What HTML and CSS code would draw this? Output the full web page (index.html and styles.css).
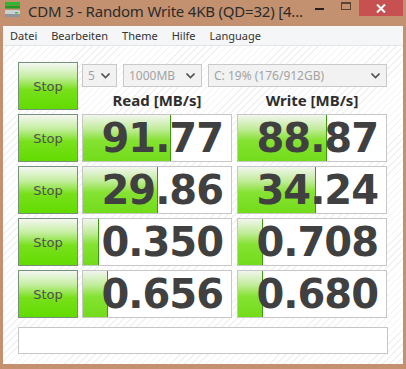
FILE: index.html
```html
<!DOCTYPE html>
<html>

<head>
  <meta charset="utf-8">
  <title>CDM 3 - Random Write 4KB (QD=32)</title>
  <link rel="stylesheet" href="styles.css">
</head>

<body>
  <div class="window">
    <div class="titlebar">
      <svg class="appicon" width="16" height="16" viewBox="0 0 16 16">
        <rect x="0" y="0" width="15" height="3" fill="#2fb82f"/>
        <rect x="0" y="3.5" width="15" height="3" fill="#1f9a1f"/>
        <rect x="0" y="8" width="15" height="7" rx="1" fill="#c9cfd3"/>
        <rect x="0" y="12" width="15" height="3" fill="#8e969b"/>
        <rect x="10" y="10" width="3" height="1.5" fill="#2fd02f"/>
      </svg>
      <span class="title">CDM 3 - Random Write 4KB (QD=32) [4...</span>
      <span class="minbtn"></span>
      <span class="maxbtn"></span>
      <span class="closebtn">
        <svg width="10" height="9" viewBox="0 0 10 9">
          <path d="M1 0.5 L9 8.5 M9 0.5 L1 8.5" stroke="#fff" stroke-width="2"/>
        </svg>
      </span>
    </div>

    <div class="menubar">
      <span>Datei</span>
      <span>Bearbeiten</span>
      <span>Theme</span>
      <span>Hilfe</span>
      <span>Language</span>
    </div>

    <div class="client">
      <div class="row">
        <button class="stop">Stop</button>
        <div class="head">
          <div class="selects">
            <div class="select w-count">5 <svg class="chev" width="9" height="6" viewBox="0 0 9 6"><path d="M0.5 0.5 L4.5 4.5 L8.5 0.5" stroke="#555" stroke-width="1.6" fill="none"/></svg></div>
            <div class="select w-size">1000MB <svg class="chev" width="9" height="6" viewBox="0 0 9 6"><path d="M0.5 0.5 L4.5 4.5 L8.5 0.5" stroke="#555" stroke-width="1.6" fill="none"/></svg></div>
            <div class="select w-drive">C: 19% (176/912GB) <svg class="chev" width="9" height="6" viewBox="0 0 9 6"><path d="M0.5 0.5 L4.5 4.5 L8.5 0.5" stroke="#555" stroke-width="1.6" fill="none"/></svg></div>
          </div>
          <div class="labels">
            <div class="label">Read [MB/s]</div>
            <div class="label">Write [MB/s]</div>
          </div>
        </div>
      </div>

      <div class="row">
        <button class="stop">Stop</button>
        <div class="cell"><div class="bar" style="width: 87px"></div><span class="num">91.77</span></div>
        <div class="cell"><div class="bar" style="width: 88px"></div><span class="num">88.87</span></div>
      </div>
      <div class="row">
        <button class="stop">Stop</button>
        <div class="cell"><div class="bar" style="width: 74px"></div><span class="num">29.86</span></div>
        <div class="cell"><div class="bar" style="width: 77px"></div><span class="num">34.24</span></div>
      </div>
      <div class="row">
        <button class="stop">Stop</button>
        <div class="cell"><div class="bar" style="width: 15px"></div><span class="num">0.350</span></div>
        <div class="cell"><div class="bar" style="width: 24px"></div><span class="num">0.708</span></div>
      </div>
      <div class="row">
        <button class="stop">Stop</button>
        <div class="cell"><div class="bar" style="width: 24px"></div><span class="num">0.656</span></div>
        <div class="cell"><div class="bar" style="width: 24px"></div><span class="num">0.680</span></div>
      </div>

      <div class="status"></div>
    </div>
  </div>
</body>

</html>
```

FILE: styles.css
```css
body {
  margin: 0;
  width: 406px;
  height: 369px;
  overflow: hidden;
  font-family: "Noto Sans", "DejaVu Sans", sans-serif;
}

.window {
  width: 406px;
  height: 369px;
  box-sizing: border-box;
  background: #c3916f;
  padding: 0 3px 5px 3px;
  display: flex;
  flex-direction: column;
}

.titlebar {
  height: 26px;
  display: flex;
  align-items: flex-start;
  position: relative;
}

.appicon {
  margin: 2px 0 0 2px;
}

.title {
  margin-left: 7px;
  margin-top: 1px;
  font-size: 15px;
  color: #2b2b2b;
  letter-spacing: -0.2px;
  white-space: nowrap;
}

.minbtn {
  position: absolute;
  left: 312px;
  top: 8px;
  width: 9px;
  height: 2px;
  background: #222;
}

.maxbtn {
  position: absolute;
  left: 338px;
  top: 2px;
  width: 8px;
  height: 5px;
  border: 1px solid #5b4334;
  border-top-width: 2px;
}

.closebtn {
  position: absolute;
  left: 356px;
  top: 0;
  width: 44px;
  height: 16px;
  background: #c75050;
  display: flex;
  align-items: center;
  justify-content: center;
}

.menubar {
  height: 19px;
  background: #f5f6f7;
  border-bottom: 1px solid #e4e6ea;
  display: flex;
  align-items: center;
  font-size: 11px;
  color: #333;
  padding-left: 7px;
  gap: 14px;
}

.client {
  flex: 1;
  background-color: #fff;
  background-image: repeating-linear-gradient(-45deg, #fff 0, #fff 4px, #f1f1f1 4px, #f1f1f1 5px);
  padding: 16px 0 0 15px;
  display: flex;
  flex-direction: column;
  gap: 4px;
}

.row {
  display: flex;
  gap: 4px;
  height: 48px;
}

.row .cell + .cell {
  margin-left: 1px;
}

.stop {
  width: 60px;
  height: 48px;
  margin: 0;
  padding: 0;
  border: 1px solid #76907a;
  background: linear-gradient(#f5f7f2 0%, #c4eea0 30%, #78e01c 58%, #62dc00 100%);
  font-family: "Comic Sans MS", "DejaVu Sans", sans-serif;
  font-size: 13px;
  color: #505050;
  cursor: pointer;
}

.head {
  width: 305px;
  padding-top: 2px;
}

.selects {
  display: flex;
  gap: 6px;
}

.select {
  height: 23px;
  box-sizing: border-box;
  border: 1px solid #c9c9c9;
  background: #f2f2f2;
  color: #a3a3a3;
  font-size: 12px;
  display: flex;
  align-items: center;
  justify-content: space-between;
  padding: 0 6px 0 5px;
}

.w-count {
  width: 35px;
}

.w-size {
  width: 79px;
}

.w-drive {
  width: 179px;
}

.labels {
  display: flex;
  gap: 5px;
  margin-top: 3px;
}

.label {
  width: 150px;
  text-align: center;
  font-weight: bold;
  font-size: 15px;
  color: #2e2e2e;
}

.cell {
  width: 150px;
  height: 48px;
  box-sizing: border-box;
  border: 1px solid #c6c6c6;
  background: #fff;
  position: relative;
  display: flex;
  align-items: center;
  justify-content: flex-end;
  padding-right: 8px;
}

.bar {
  position: absolute;
  left: 0;
  top: 0;
  bottom: 0;
  background: linear-gradient(#f2f6ee 0%, #c2ec9c 30%, #86e233 55%, #72dc1a 100%);
  border-right: 1px solid #3c9a10;
}

.num {
  position: relative;
  font-family: "DejaVu Sans", sans-serif;
  font-weight: bold;
  font-size: 40px;
  letter-spacing: -1px;
  color: #404040;
  line-height: 1;
}

.status {
  margin-top: 5px;
  width: 370px;
  height: 27px;
  box-sizing: border-box;
  border: 1px solid #c6c6c6;
  background: #fff;
}
```
